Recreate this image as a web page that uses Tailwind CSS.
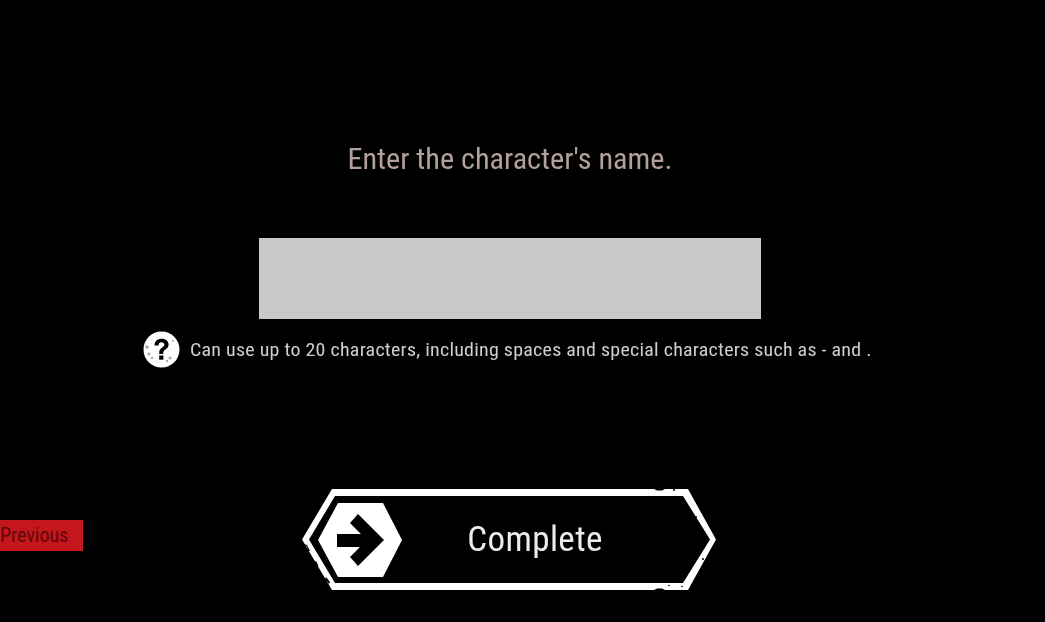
<!DOCTYPE html>
<html lang="en">
<head>
<meta charset="UTF-8">
<script src="https://cdn.jsdelivr.net/npm/@tailwindcss/browser@4"></script>
<title>Character name</title>
</head>
<body class="bg-black w-[1045px] h-[622px] overflow-hidden font-['Roboto',sans-serif]">
  <div class="blur-[0.6px]">
    <div class="flex flex-col items-center pt-[141px] w-[1020px]">
      <h1 class="text-[29px] leading-[36px] text-[#b3a09b] font-normal [font-stretch:75%] scale-x-[1.042]">Enter the character's name.</h1>
      <div class="w-[502px] h-[81px] mt-[61px] bg-[#c8c8c8]"></div>
    </div>

    <div class="flex items-center mt-[12px] pl-[143px] gap-[10px]">
      <svg class="w-[37px] h-[37px]" viewBox="0 0 37 37">
        <circle cx="18.5" cy="18.5" r="18" fill="#fff"/>
        <path d="M11.500 14.500c0-4.200 3.100-6.800 7.200-6.800 4 0 6.900 2.400 6.900 5.800 0 2.600-1.500 3.900-3.200 5.100-1.500 1.100-2.200 1.800-2.200 3.600v.8h-4v-1.300c0-2.600 1.200-3.900 3-5.200 1.400-1 2.200-1.700 2.200-2.900 0-1.400-1.200-2.400-2.800-2.400-1.800 0-3 1.200-3 3.200z" fill="#000"/>
        <rect x="16.200" y="24.500" width="4.200" height="4.200" fill="#000"/>
        <g fill="#aaa">
          <circle cx="4" cy="16" r="1.800"/><circle cx="6" cy="23" r="1.500"/><circle cx="9" cy="27" r="1.200"/>
          <circle cx="27" cy="27" r="1.500"/><circle cx="24" cy="30" r="1.200"/><circle cx="30" cy="10" r="1"/>
        </g>
      </svg>
      <p class="whitespace-nowrap origin-left text-[19px] leading-[24px] text-[#cfcfcf] tracking-[0.23px] [font-stretch:75%] scale-x-[1.05]">Can use up to 20 characters, including spaces and special characters such as - and .</p>
    </div>

    <div class="flex items-start mt-[121px]">
      <button class="w-[83px] h-[31px] mt-[31px] bg-[#c4161c] text-[#5c0a0e] text-[20px] leading-[31px] text-left [font-stretch:75%]">Previous</button>
      <button class="relative ml-[219px] w-[415px] h-[102px] flex items-center justify-center text-[#ececec]">
        <svg class="absolute inset-0 w-[415px] h-[102px]" viewBox="0 0 415 102">
          <path fill="#fff" fill-rule="evenodd" d="M30 0H386L414 50.500 386 101H30L0 50.500ZM33 7L7 50.500 33 94H381L408 50.500 381 7Z"/>
          <g fill="#000">
            <path d="M352 0L355 1.500 360 1.500 363 0Z"/>
            <path d="M2 55L5 58 6 62 8 62 5 56Z"/>
            <path d="M12 73L15 78 16.500 77 14 72ZM23 90L27 95 28 93 24 88Z"/>
            <path d="M352 101L355 99.500 360 99.500 363 101Z"/>
            <circle cx="372" cy="1" r="1"/>
            <circle cx="367" cy="96.500" r="0.800"/><circle cx="380" cy="97.500" r="0.800"/>
            <circle cx="394" cy="28" r="1"/><circle cx="401" cy="70" r="1"/>
          </g>
          <path fill="#fff" d="M36 14H81L100 51 81 88H36L16 51Z"/>
          <path fill="#000" d="M35 45H59L48 34 56 25 82 51 56 77 48 68 58 58H35Z"/>
        </svg>
        <span class="relative pl-[51px] text-[35px] leading-[44px] tracking-[0.4px] [font-stretch:75%]">Complete</span>
      </button>
    </div>
  </div>
</body>
</html>
